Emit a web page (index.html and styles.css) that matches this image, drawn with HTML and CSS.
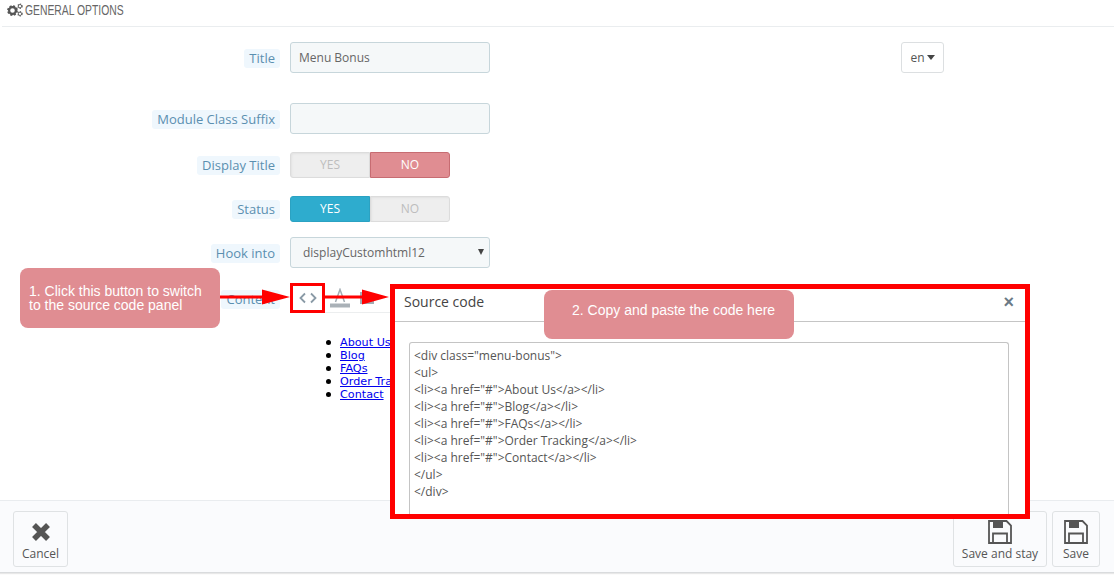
FILE: index.html
```html
<!DOCTYPE html>
<html lang="en">
<head>
<meta charset="utf-8">
<title>General options</title>
<link rel="stylesheet" href="styles.css">
</head>
<body>
<div class="page">
  <main class="panel">
    <h2 class="panel-head">
      <svg class="gears" width="18" height="14" viewBox="0 0 18 14">
        <circle class="gear-teeth" cx="6.5" cy="7.5" r="4.4"/>
        <circle class="gear-ring" cx="6.5" cy="7.5" r="3.4"/>
        <circle class="small-teeth" cx="14" cy="3.2" r="2.1"/>
        <circle class="small-ring" cx="14" cy="3.2" r="1.7"/>
        <circle class="small-teeth" cx="14" cy="10.8" r="2.1"/>
        <circle class="small-ring" cx="14" cy="10.8" r="1.7"/>
      </svg>
      <span>GENERAL OPTIONS</span>
    </h2>
    <form class="form">
      <div class="row row-title">
        <div class="label-cell"><label class="label">Title</label></div>
        <input class="field" type="text" value="Menu Bonus">
        <button type="button" class="lang">en<i class="caret"></i></button>
      </div>
      <div class="row row-suffix">
        <div class="label-cell"><label class="label">Module Class Suffix</label></div>
        <input class="field" type="text">
      </div>
      <div class="row row-display">
        <div class="label-cell label-cell-tight"><label class="label">Display Title</label></div>
        <div class="toggle"><span class="opt off">YES</span><span class="opt no">NO</span></div>
      </div>
      <div class="row row-status">
        <div class="label-cell label-cell-tight"><label class="label">Status</label></div>
        <div class="toggle"><span class="opt yes">YES</span><span class="opt off">NO</span></div>
      </div>
      <div class="row row-hook">
        <div class="label-cell"><label class="label">Hook into</label></div>
        <div class="field select">displayCustomhtml12<i class="select-arrow"></i></div>
      </div>
      <div class="row row-content">
        <div class="label-cell"><label class="label">Content</label></div>
        <div class="editor">
          <div class="toolbar">
            <span class="tool tool-code">
              <svg width="18" height="12" viewBox="0 0 18 12"><path d="M6 1.5 1.5 6 6 10.500M12 1.500 16.500 6 12 10.500"/></svg>
            </span>
            <span class="tool tool-a">
              <svg width="20" height="20" viewBox="0 0 20 20"><path class="a-glyph" d="M5.500 14 10 1.500 14.500 14M7 9.500h6"/><rect class="a-bar" x="0" y="15.500" width="20" height="4"/></svg>
            </span>
            <span class="tool tool-b">
              <svg width="16" height="14" viewBox="0 0 16 14"><path class="b-glyph" d="M1 1h9l5 5v7H1z"/></svg>
            </span>
          </div>
          <ul class="preview">
            <li><a href="#">About Us</a></li>
            <li><a href="#">Blog</a></li>
            <li><a href="#">FAQs</a></li>
            <li><a href="#">Order Tracking</a></li>
            <li><a href="#">Contact</a></li>
          </ul>
        </div>
      </div>
    </form>
  </main>
  <footer class="footer">
    <button type="button" class="action action-cancel">
      <svg width="20" height="20" viewBox="0 0 20 20"><path class="x-icon" d="M3 3 17 17M17 3 3 17"/></svg>
      <span>Cancel</span>
    </button>
    <div class="footer-right">
      <button type="button" class="action action-stay">
        <svg width="24" height="24" viewBox="0 0 24 24"><path class="disk" d="M1 1h17.500L23 5.500V23H1z"/><rect class="disk-fill" x="5" y="1" width="10" height="7"/><path class="disk" d="M5 23V13.500h14V23"/></svg>
        <span>Save and stay</span>
      </button>
      <button type="button" class="action action-save">
        <svg width="24" height="24" viewBox="0 0 24 24"><path class="disk" d="M1 1h17.500L23 5.500V23H1z"/><rect class="disk-fill" x="5" y="1" width="10" height="7"/><path class="disk" d="M5 23V13.500h14V23"/></svg>
        <span>Save</span>
      </button>
    </div>
  </footer>

  <section class="modal">
    <header class="modal-head">
      <span class="modal-title">Source code</span>
      <span class="modal-close">×</span>
    </header>
    <div class="modal-body">
      <textarea class="code" spellcheck="false">&lt;div class="menu-bonus"&gt;
&lt;ul&gt;
&lt;li&gt;&lt;a href="#"&gt;About Us&lt;/a&gt;&lt;/li&gt;
&lt;li&gt;&lt;a href="#"&gt;Blog&lt;/a&gt;&lt;/li&gt;
&lt;li&gt;&lt;a href="#"&gt;FAQs&lt;/a&gt;&lt;/li&gt;
&lt;li&gt;&lt;a href="#"&gt;Order Tracking&lt;/a&gt;&lt;/li&gt;
&lt;li&gt;&lt;a href="#"&gt;Contact&lt;/a&gt;&lt;/li&gt;
&lt;/ul&gt;
&lt;/div&gt;</textarea>
    </div>
  </section>

  <div class="callout callout-one">1. Click this button to switch<br>to the source code panel</div>
  <div class="callout callout-two">2. Copy and paste the code here</div>
  <span class="code-highlight"></span>
  <svg class="arrow arrow-one" width="70" height="20" viewBox="0 0 70 20"><path d="M0 8.500h42V2.500L70 10 42 17.500V11.500H0z"/></svg>
  <svg class="arrow arrow-two" width="64" height="20" viewBox="0 0 64 20"><path d="M0 8.500h37V2.500L64 10 37 17.500V11.500H0z"/></svg>
</div>
</body>
</html>
```
FILE: styles.css
```css
* { box-sizing: border-box; }
html, body { margin: 0; padding: 0; background: #fff; }
body { font-family: "Open Sans", sans-serif; color: #555; overflow: hidden; }
.page { position: relative; width: 1114px; height: 576px; overflow: hidden; display: flex; flex-direction: column; }

.panel { height: 500px; flex: none; overflow: hidden; }
.panel-head { height: 27px; margin: 0 0 0 2px; padding: 2px 0 0 4px; border-bottom: 1px solid #eaedef; display: flex; align-items: flex-start; gap: 1px; font: 400 14px/16px "Liberation Sans", sans-serif; color: #666; }
.panel-head span { display: block; transform: scaleX(.74); transform-origin: left center; white-space: nowrap; }
.gears { margin-top: 1px; }
.gear-teeth { fill: none; stroke: #555; stroke-width: 2; stroke-dasharray: 2 1.460; }
.gear-ring { fill: none; stroke: #555; stroke-width: 2.2; }
.small-teeth { fill: none; stroke: #666; stroke-width: 1.200; stroke-dasharray: 1.100 1.100; }
.small-ring { fill: none; stroke: #666; stroke-width: 1; }

.form { display: flex; flex-direction: column; }
.row { display: grid; grid-template-columns: 280px 200px auto; column-gap: 10px; align-items: center; }
.row-title { margin-top: 15px; }
.row-suffix { margin-top: 30px; }
.row-display { margin-top: 18px; }
.row-status { margin-top: 18px; }
.row-hook { margin-top: 15px; }
.row-content { margin-top: 15px; align-items: start; }
.label-cell { display: flex; justify-content: flex-end; padding-top: 2px; }
.label-cell-tight { padding-top: 0; }
.label { display: block; height: 19px; padding: 0 5px; font-size: 13px; line-height: 18px; color: #5b8fb0; background: #eff7fd; border-radius: 3px; }
.row-content .label { margin-top: 5px; }

.field { display: block; width: 200px; height: 31px; padding: 0 8px; background: #f5f8f9; border: 1px solid #c7d6db; border-radius: 3px; font: 12px/29px "Open Sans", sans-serif; color: #666; outline: 0; }
.select { position: relative; padding-left: 12px; }
.select-arrow { position: absolute; right: 5px; top: 11px; border: 3px solid transparent; border-top: 6px solid #444; border-bottom: 0; }

.lang { margin-left: 401px; width: 43px; height: 31px; padding: 0; background: #fff; border: 1px solid #dcdfe1; border-radius: 3px; font: 12px "Open Sans", sans-serif; color: #555; display: flex; align-items: center; justify-content: center; gap: 2px; }
.caret { border: 4px solid transparent; border-top: 5px solid #444; border-bottom: 0; }

.toggle { width: 160px; height: 26px; display: flex; }
.opt { width: 80px; height: 26px; font-size: 12px; line-height: 24px; text-align: center; border: 1px solid #dcdcdc; }
.opt:first-child { border-radius: 3px 0 0 3px; }
.opt:last-child { border-radius: 0 3px 3px 0; }
.off { background: #eeeeee; color: #bdbdbd; box-shadow: inset 1px 1px 2px #e2e2e2; }
.no { background: #e08d92; border-color: #c76c72; color: #fff; }
.yes { background: #2eacce; border-color: #2ba2c2; color: #fff; }

.editor { width: 700px; }
.toolbar { height: 30px; display: flex; align-items: center; border-bottom: 1px solid #eceeef; }
.tool { display: flex; align-items: center; justify-content: center; }
.tool-code { width: 35px; height: 29px; }
.tool-code svg { fill: none; stroke: #8a9aa6; stroke-width: 1.800; }
.tool-a { width: 22px; margin-left: 4px; }
.a-glyph { fill: none; stroke: #a3adb4; stroke-width: 1.500; }
.a-bar { fill: #a9b1b7; }
.tool-b { width: 16px; margin-left: 8px; }
.b-glyph { fill: #a3adb4; }

.preview { margin: 23px 0 0; padding: 0 0 0 36px; list-style: none; font: 11.200px/13px "DejaVu Sans", sans-serif; color: #000; }
.preview li { display: flex; align-items: center; gap: 9px; height: 13px; }
.preview li::before { content: ""; flex: none; width: 5px; height: 5px; border-radius: 50%; background: #000; }
.preview a { color: #00e; text-decoration: underline; white-space: nowrap; }

.footer { height: 73px; flex: none; display: flex; justify-content: space-between; padding: 10px 14px 0 13px; background: #fafbfd; border-top: 1px solid #e9ecef; border-bottom: 1px solid #d9dbdd; box-shadow: 0 1px 1px #e8e8e8; }
.footer-right { display: flex; gap: 5px; }
.action { height: 56px; padding: 0; display: flex; flex-direction: column; align-items: center; background: #fafbfd; border: 1px solid #dfe2e4; border-radius: 3px; font: 12px/14px "Open Sans", sans-serif; color: #555; white-space: nowrap; }
.action svg { display: block; flex: none; margin-top: 8px; }
.action span { margin-top: 3px; }
.action-cancel { width: 55px; }
.action-cancel svg { margin-top: 10px; }
.action-cancel span { margin-top: 5px; }
.action-stay { width: 94px; }
.action-save { width: 48px; }
.x-icon { fill: none; stroke: #555; stroke-width: 5.500; }
.disk { fill: none; stroke: #555; stroke-width: 1.800; }
.disk-fill { fill: #555; }

.modal { position: absolute; left: 390px; top: 284px; width: 640px; height: 235px; background: #fff; border: 5px solid #f00; }
.modal-head { height: 33px; padding: 2px 11px 0 9px; border-bottom: 1px solid #c5c5c5; display: flex; align-items: flex-start; justify-content: space-between; }
.modal-title { font-size: 14px; line-height: 22px; color: #444; }
.modal-close { font: 700 18px/22px "Liberation Sans", sans-serif; color: #6b7a86; }
.modal-body { padding: 20px 15px 0 14px; }
.code { display: block; width: 600px; height: 172px; padding: 4px 4px; margin: 0; border: 1px solid #c4c4c4; border-bottom: 0; border-radius: 3px 3px 0 0; font: 12px/17px "Open Sans", sans-serif; color: #555; background: #fff; resize: none; overflow: hidden; outline: 0; white-space: pre; }

.callout { position: absolute; background: #e08d92; color: #fff; border-radius: 8px; font: 14px/14px "Liberation Sans", sans-serif; }
.callout-one { left: 20px; top: 268px; width: 200px; height: 60px; padding: 16px 0 0 9px; }
.callout-two { left: 544px; top: 290px; width: 250px; height: 49px; padding: 13px 0 0 28px; }
.code-highlight { position: absolute; left: 290px; top: 283px; width: 35px; height: 30px; border: 3px solid #f00; }
.arrow { position: absolute; }
.arrow path { fill: #f00; }
.arrow-one { left: 220px; top: 287px; }
.arrow-two { left: 325px; top: 287px; }
```
